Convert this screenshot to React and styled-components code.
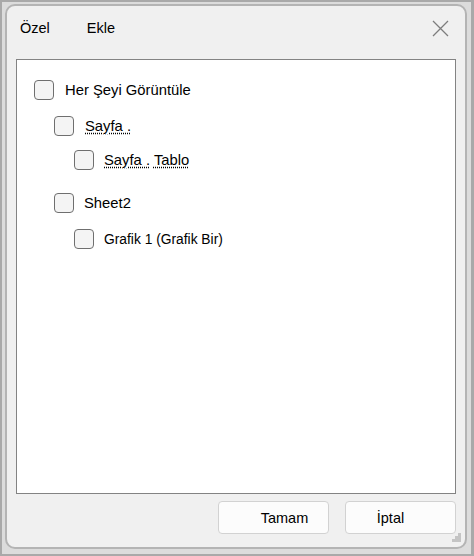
import styled, { createGlobalStyle } from 'styled-components';

const Global = createGlobalStyle`
  html, body {
    margin: 0;
    padding: 0;
    background: #a9a9a9;
  }
  #root {
    width: 474px;
    height: 556px;
  }
`;

const Frame = styled.div`
  box-sizing: border-box;
  width: 474px;
  height: 556px;
  border: 2px solid #a9a9a9;
  border-right-width: 3px;
  background: #dcdcdc;
  padding: 2px 4px 5px 3px;
  display: flex;
`;

const Dialog = styled.div`
  box-sizing: border-box;
  flex: 1;
  border: 2px solid #b4b4b4;
  border-radius: 10px;
  background: #f0f0f0;
  display: flex;
  flex-direction: column;
  padding: 0 9px;
  font-family: "Liberation Sans", Arial, sans-serif;
  color: #000;
`;

const Header = styled.div`
  height: 53px;
  display: flex;
  align-items: center;
  padding-left: 4px;
  padding-bottom: 9px;
  box-sizing: border-box;
`;

const Tab = styled.span`
  font-size: 14.5px;
  margin-right: ${p => p.$gap || 0}px;
`;

const Close = styled.button`
  margin-left: auto;
  margin-right: 6px;
  width: 20px;
  height: 20px;
  border: none;
  background: none;
  padding: 0;
  display: flex;
  align-items: center;
  justify-content: center;
`;

const Panel = styled.div`
  box-sizing: border-box;
  height: 435px;
  background: #fff;
  border: 1px solid #838383;
  padding: 20px 0 0 17px;
  display: flex;
  flex-direction: column;
`;

const Row = styled.div`
  display: flex;
  align-items: center;
  height: 20px;
  margin-left: ${p => p.$level * 20}px;
  margin-bottom: ${p => p.$after}px;
`;

const Box = styled.span`
  box-sizing: border-box;
  width: 20px;
  height: 20px;
  border: 1px solid #6f6f6f;
  border-radius: 4px;
  background: #f4f4f4;
  flex-shrink: 0;
`;

const Label = styled.span`
  font-size: ${p => p.$small ? 13.8 : 14.8}px;
  margin-left: ${p => p.$indent}px;
  white-space: pre;
`;

const Under = styled.span`
  text-decoration: underline;
  text-decoration-style: dotted;
  text-underline-offset: 2px;
`;

const Footer = styled.div`
  flex: 1;
  display: flex;
  justify-content: flex-end;
  align-items: flex-start;
  gap: 16px;
  padding-top: 7px;
  position: relative;
`;

const Button = styled.button`
  box-sizing: border-box;
  width: 111px;
  height: 33px;
  border: 1px solid #d2d2d2;
  border-radius: 4px;
  background: #fcfcfc;
  font-family: "Liberation Sans", Arial, sans-serif;
  font-size: 14.5px;
  color: #000;
  padding: 0 ${p => p.$right || 0}px 0 ${p => p.$left || 0}px;
`;

const Grip = styled.svg`
  position: absolute;
  right: -6px;
  bottom: 4px;
`;

const rows = [
  { level: 0, indent: 11, after: 16, text: 'Her Şeyi Görüntüle' },
  { level: 1, indent: 11, after: 14, text: <Under>Sayfa .</Under> },
  { level: 2, indent: 10, after: 23, text: <><Under>Sayfa .</Under> <Under>Tablo</Under></> },
  { level: 1, indent: 10, after: 16, text: 'Sheet2' },
  { level: 2, indent: 10, after: 0, text: 'Grafik 1 (Grafik Bir)', small: true },
];

const App = () => {
  return (
    <Frame>
      <Global />
      <Dialog>
        <Header>
          <Tab $gap={37}>Özel</Tab>
          <Tab>Ekle</Tab>
          <Close>
            <svg width="17" height="17" viewBox="0 0 17 17">
              <path d="M1 1 L16 16 M16 1 L1 16" stroke="#7d7d7d" strokeWidth="1.3" fill="none" />
            </svg>
          </Close>
        </Header>
        <Panel>
          {rows.map((r, i) => (
            <Row key={i} $level={r.level} $after={r.after}>
              <Box />
              <Label $indent={r.indent} $small={r.small}>{r.text}</Label>
            </Row>
          ))}
        </Panel>
        <Footer>
          <Button $left={22}>Tamam</Button>
          <Button $right={20}>İptal</Button>
          <Grip width="10" height="10" viewBox="0 0 10 10">
            <rect x="6" y="0" width="3" height="3" fill="#c4c4c4" />
            <rect x="3" y="3" width="3" height="3" fill="#c4c4c4" />
            <rect x="6" y="3" width="3" height="3" fill="#c4c4c4" />
            <rect x="0" y="6" width="3" height="3" fill="#c4c4c4" />
            <rect x="3" y="6" width="3" height="3" fill="#c4c4c4" />
            <rect x="6" y="6" width="3" height="3" fill="#c4c4c4" />
          </Grip>
        </Footer>
      </Dialog>
    </Frame>
  );
};

export default App;
